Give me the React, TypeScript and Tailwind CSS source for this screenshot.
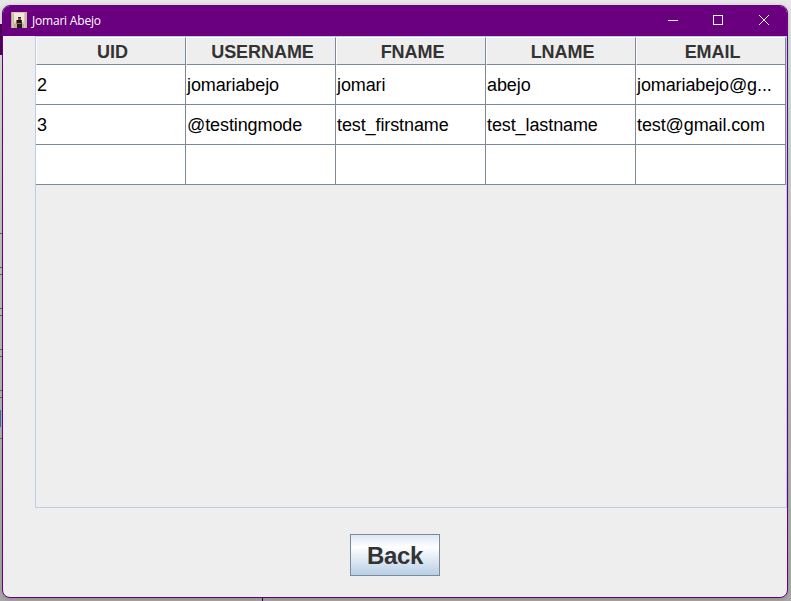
const columns = ["UID", "USERNAME", "FNAME", "LNAME", "EMAIL"];

const rows = [
  ["2", "jomariabejo", "jomari", "abejo", "jomariabejo@g..."],
  ["3", "@testingmode", "test_firstname", "test_lastname", "test@gmail.com"],
  ["", "", "", "", ""],
];

// Field edges of the window behind that stay visible on the left.
const edges = [233, 267, 274, 308, 315, 349, 356, 390, 397, 438];

function Avatar() {
  return (
    <svg width="16" height="16" viewBox="0 0 16 16" shapeRendering="crispEdges">
      <rect width="16" height="16" fill="#d6cab5" />
      <rect x="3" y="1" width="10" height="9" fill="#f0e8da" />
      <rect x="0" y="0" width="1" height="16" fill="#b8a88f" />
      <rect x="14" y="0" width="2" height="16" fill="#c8baa4" />
      <rect x="2" y="2" width="1" height="13" fill="#c4b69f" />
      <rect x="3" y="12" width="10" height="4" fill="#c3ad93" />
      <rect x="7" y="5" width="3" height="1" fill="#35221f" />
      <rect x="7" y="6" width="3" height="2" fill="#875440" />
      <rect x="6" y="8" width="4" height="3" fill="#17151b" />
      <rect x="5" y="8" width="1" height="4" fill="#a06450" />
      <rect x="10" y="8" width="1" height="4" fill="#4a302b" />
      <rect x="6" y="11" width="4" height="1" fill="#a36a52" />
      <rect x="6" y="12" width="5" height="4" fill="#241c22" />
    </svg>
  );
}

function TitleBar() {
  return (
    <header className="flex h-[30px] shrink-0 items-center bg-[#6a0080] pl-2 text-white">
      <div className="-mt-0.5">
        <Avatar />
      </div>
      <span className="ml-[5px] grow font-['Open_Sans','Noto_Sans',sans-serif] text-[12px] leading-4 tracking-[-0.2px]">
        Jomari Abejo
      </span>
      <div className="flex">
        <span className="flex h-[30px] w-[46px] items-center justify-center pl-[2px]">
          <svg width="10" height="10" fill="none" stroke="white">
            <path d="M0 4.5h10" />
          </svg>
        </span>
        <span className="flex h-[30px] w-[46px] items-center justify-center pb-[2px]">
          <svg width="10" height="10" fill="none" stroke="white">
            <rect x=".5" y=".5" width="9" height="9" />
          </svg>
        </span>
        <span className="flex h-[30px] w-[46px] items-center justify-center pb-[2px]">
          <svg width="10" height="10" fill="none" stroke="white">
            <path d="M0 0l10 10M10 0L0 10" />
          </svg>
        </span>
      </div>
    </header>
  );
}

export default function App() {
  return (
    <div className="relative h-[601px] w-[791px] overflow-hidden bg-linear-to-b from-[#e8e8e8] via-[#c8c8c8] via-40% to-[#a8a8a8] font-['Liberation_Sans',Arial,sans-serif]">
      <div className="absolute top-6 left-0 h-[31px] w-1 bg-[#500062]" />
      {edges.map((y) => (
        <div key={y} className="absolute left-0 h-px w-[2px] bg-[#666]" style={{ top: y }} />
      ))}
      <div className="absolute top-[410px] left-0 h-[17px] w-px bg-[#3f72b0]" />
      <div className="absolute top-[598px] left-[262px] h-[3px] w-px bg-[#3a0048]" />

      <div className="absolute top-[5px] left-[2px] flex h-[593px] w-[786px] flex-col overflow-hidden rounded-lg border border-[#6a0080] bg-[#eeeeee] shadow-[0_1px_5px_rgba(0,0,0,0.2)]">
        <TitleBar />
        <main className="flex grow flex-col items-center pl-8">
          <div className="h-[472px] w-[752px] border border-[#b8cfe5]">
            <div className="grid grid-cols-5">
              {columns.map((name) => (
                <div
                  key={name}
                  className="flex h-7 items-center justify-center border-t border-r border-b border-l border-t-white border-r-[#7a8a99] border-b-[#7a8a99] border-l-white pt-[2px] pl-[3px] text-[18px] leading-5 font-bold tracking-[-0.05px] text-[#333333]"
                >
                  {name}
                </div>
              ))}
            </div>
            {rows.map((cells, i) => (
              <div key={i} className="grid grid-cols-5">
                {cells.map((cell, j) => (
                  <div
                    key={j}
                    className="flex h-10 items-center border-r border-b border-[#7a8a99] bg-white pl-px text-[18px] leading-5 tracking-[-0.1px] text-black"
                  >
                    {cell}
                  </div>
                ))}
              </div>
            ))}
          </div>
          <button className="mt-[26px] mr-[32px] flex h-[42px] w-[90px] items-center justify-center border border-[#7a8a99] bg-linear-to-b from-[#dde8f3] via-white via-30% to-[#b8cfe5] pt-[2px] text-[24px] leading-7 font-bold tracking-[-0.4px] text-[#333333]">
            Back
          </button>
        </main>
      </div>
    </div>
  );
}
